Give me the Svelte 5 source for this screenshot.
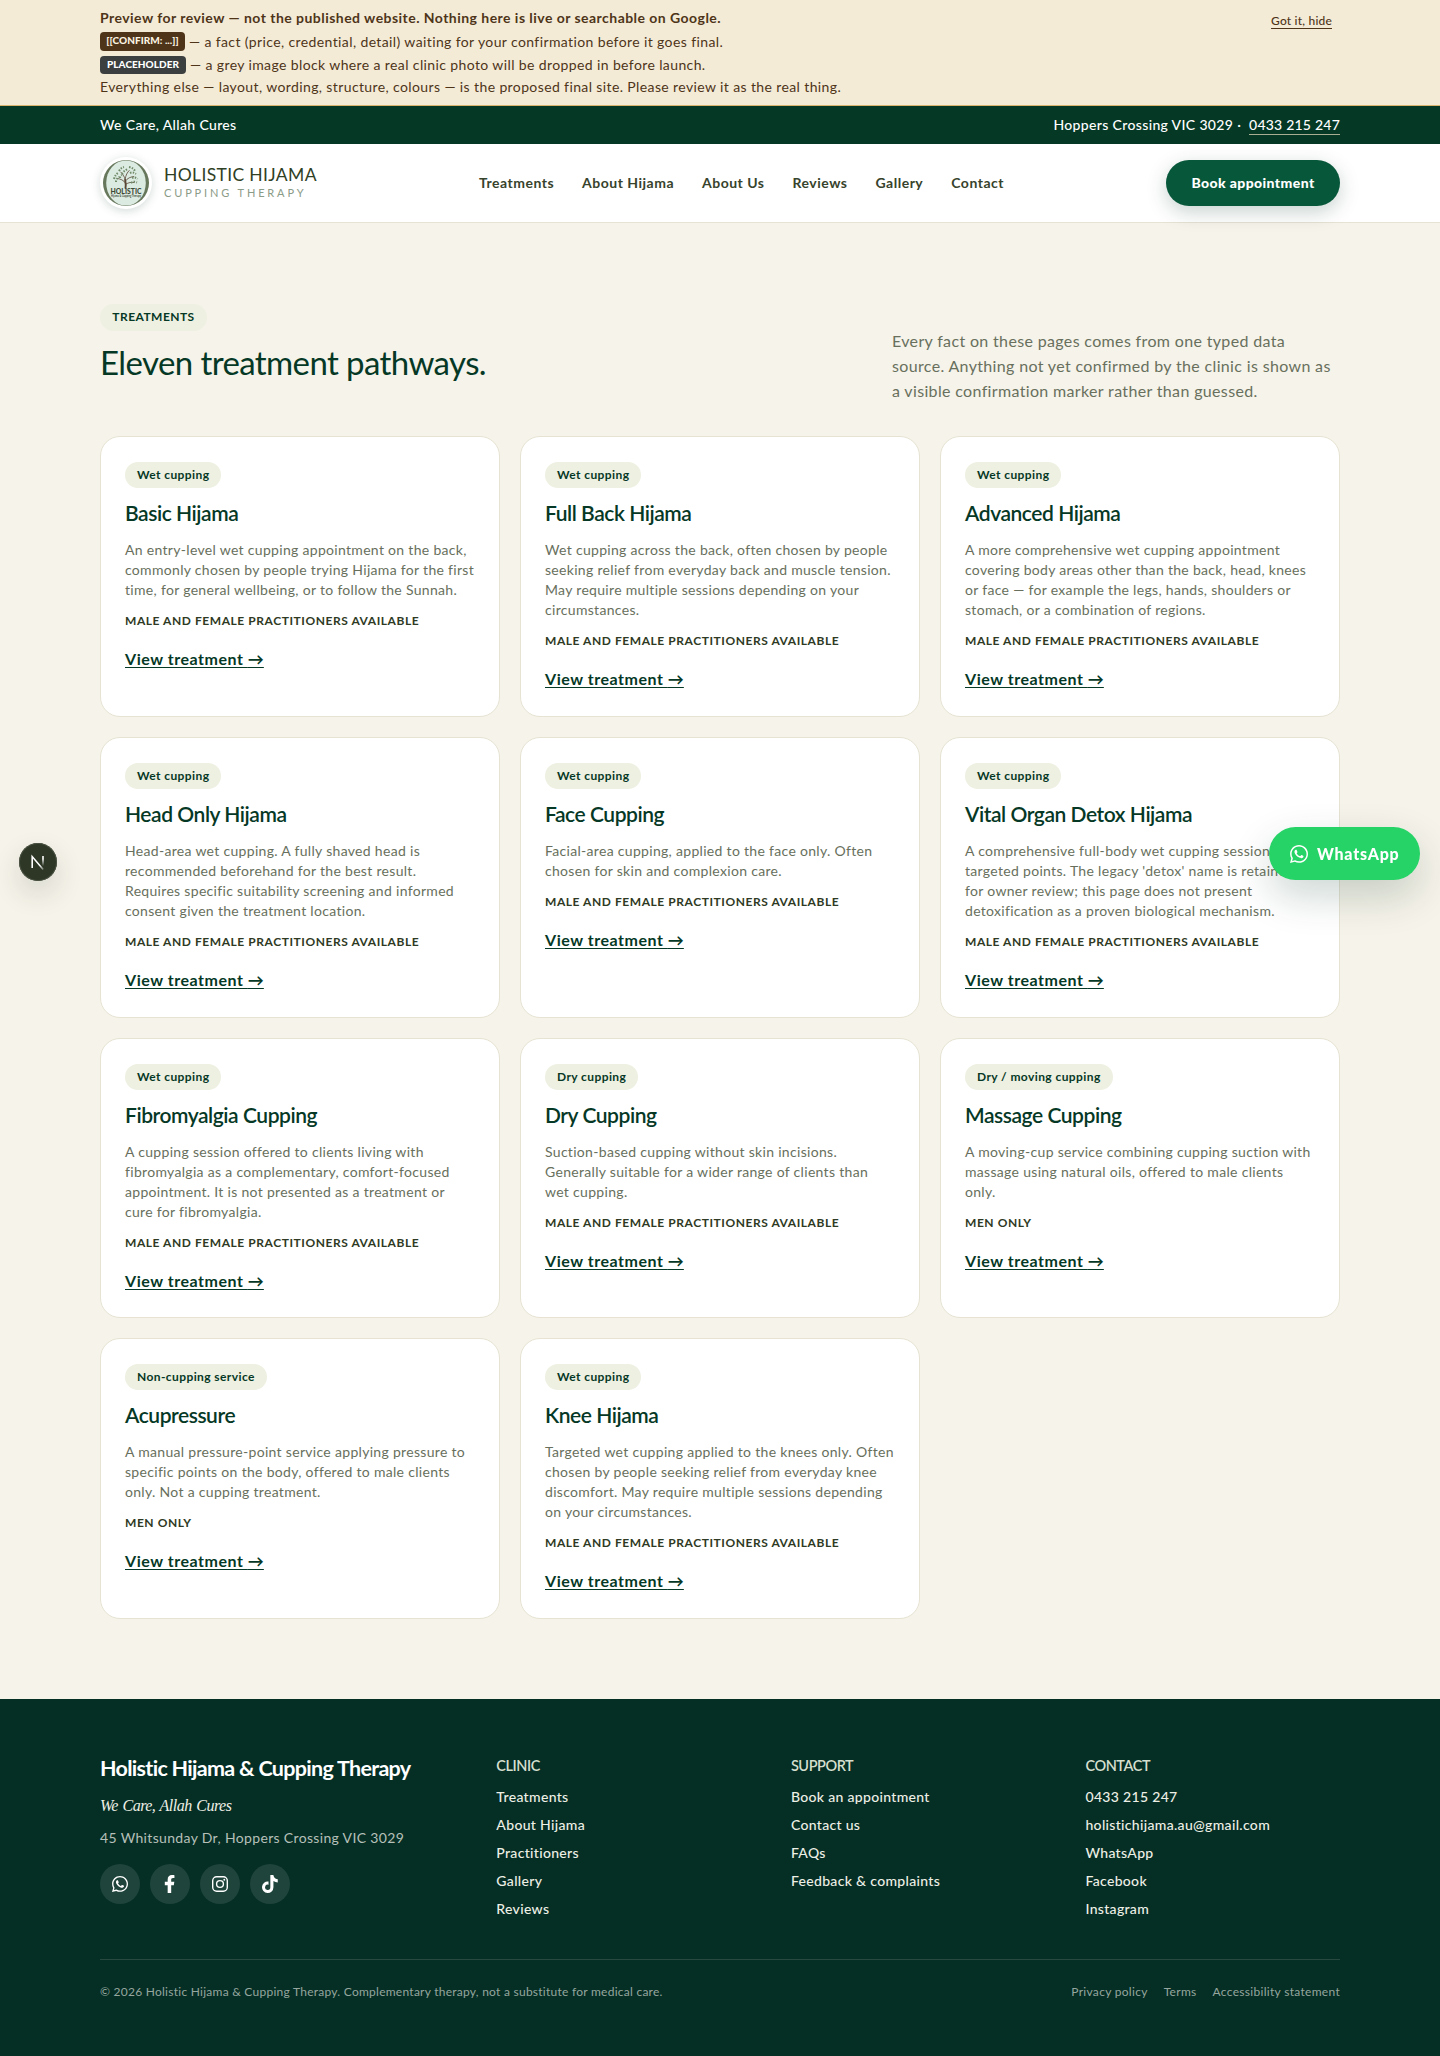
<script lang="ts">
  const nav = ["Treatments", "About Hijama", "About Us", "Reviews", "Gallery", "Contact"];

  const both = "Male and female practitioners available";
  const men = "Men only";

  // line breaks in the descriptions are kept as written
  const treatments = [
    {
      type: "Wet cupping",
      name: "Basic Hijama",
      text: "An entry-level wet cupping appointment on the back,\ncommonly chosen by people trying Hijama for the first\ntime, for general wellbeing, or to follow the Sunnah.",
      who: both,
    },
    {
      type: "Wet cupping",
      name: "Full Back Hijama",
      text: "Wet cupping across the back, often chosen by people\nseeking relief from everyday back and muscle tension.\nMay require multiple sessions depending on your\ncircumstances.",
      who: both,
    },
    {
      type: "Wet cupping",
      name: "Advanced Hijama",
      text: "A more comprehensive wet cupping appointment\ncovering body areas other than the back, head, knees\nor face — for example the legs, hands, shoulders or\nstomach, or a combination of regions.",
      who: both,
    },
    {
      type: "Wet cupping",
      name: "Head Only Hijama",
      text: "Head-area wet cupping. A fully shaved head is\nrecommended beforehand for the best result.\nRequires specific suitability screening and informed\nconsent given the treatment location.",
      who: both,
    },
    {
      type: "Wet cupping",
      name: "Face Cupping",
      text: "Facial-area cupping, applied to the face only. Often\nchosen for skin and complexion care.",
      who: both,
    },
    {
      type: "Wet cupping",
      name: "Vital Organ Detox Hijama",
      text: "A comprehensive full-body wet cupping session on\ntargeted points. The legacy 'detox' name is retained\nfor owner review; this page does not present\ndetoxification as a proven biological mechanism.",
      who: both,
    },
    {
      type: "Wet cupping",
      name: "Fibromyalgia Cupping",
      text: "A cupping session offered to clients living with\nfibromyalgia as a complementary, comfort-focused\nappointment. It is not presented as a treatment or\ncure for fibromyalgia.",
      who: both,
    },
    {
      type: "Dry cupping",
      name: "Dry Cupping",
      text: "Suction-based cupping without skin incisions.\nGenerally suitable for a wider range of clients than\nwet cupping.",
      who: both,
    },
    {
      type: "Dry / moving cupping",
      name: "Massage Cupping",
      text: "A moving-cup service combining cupping suction with\nmassage using natural oils, offered to male clients\nonly.",
      who: men,
    },
    {
      type: "Non-cupping service",
      name: "Acupressure",
      text: "A manual pressure-point service applying pressure to\nspecific points on the body, offered to male clients\nonly. Not a cupping treatment.",
      who: men,
    },
    {
      type: "Wet cupping",
      name: "Knee Hijama",
      text: "Targeted wet cupping applied to the knees only. Often\nchosen by people seeking relief from everyday knee\ndiscomfort. May require multiple sessions depending\non your circumstances.",
      who: both,
    },
  ];

  const columns = [
    { title: "Clinic", links: ["Treatments", "About Hijama", "Practitioners", "Gallery", "Reviews"] },
    { title: "Support", links: ["Book an appointment", "Contact us", "FAQs", "Feedback & complaints"] },
    {
      title: "Contact",
      links: ["0433 215 247", "holistichijama.au@gmail.com", "WhatsApp", "Facebook", "Instagram"],
    },
  ];

  let bannerOpen = true;
</script>

{#snippet whatsapp()}
  <svg class="wa" viewBox="0 32 448 448" aria-hidden="true">
    <path
      d="M380.9 97.1C339 55.1 283.2 32 223.9 32c-122.4 0-222 99.6-222 222 0 39.1 10.2 77.3 29.6 111L0 480l117.7-30.9c32.4 17.7 68.9 27 106.1 27h.1c122.3 0 224.1-99.6 224.1-222 0-59.3-25.2-115-67.1-157zm-157 341.6c-33.2 0-65.7-8.9-94-25.7l-6.7-4-69.8 18.3L72 359.2l-4.4-7c-18.5-29.4-28.2-63.3-28.2-98.2 0-101.7 82.8-184.5 184.6-184.5 49.3 0 95.6 19.2 130.4 54.1 34.8 34.9 56.2 81.2 56.1 130.5 0 101.8-84.9 184.6-186.6 184.6zm101.2-138.2c-5.5-2.8-32.8-16.2-37.9-18-5.1-1.9-8.8-2.8-12.5 2.8-3.7 5.6-14.3 18-17.6 21.8-3.2 3.7-6.5 4.2-12 1.4-32.6-16.3-54-29.1-75.5-66-5.7-9.8 5.7-9.1 16.3-30.3 1.8-3.7.9-6.9-.5-9.7-1.4-2.8-12.5-30.1-17.1-41.2-4.5-10.8-9.1-9.3-12.5-9.5-3.2-.2-6.9-.2-10.6-.2-3.7 0-9.7 1.4-14.8 6.9-5.1 5.6-19.4 19-19.4 46.3 0 27.3 19.9 53.7 22.6 57.4 2.8 3.7 39.1 59.7 94.8 83.8 35.2 15.2 49 16.5 66.6 13.9 10.7-1.6 32.8-13.4 37.4-26.4 4.6-13 4.6-24.1 3.2-26.4-1.3-2.5-5-3.9-10.5-6.6z"
    />
  </svg>
{/snippet}

{#if bannerOpen}
  <aside class="banner">
    <div class="wrap banner-inner">
      <div class="banner-lines">
        <p><strong>Preview for review — not the published website. Nothing here is live or searchable on Google.</strong></p>
        <p class="tall">
          <span class="chip">[[CONFIRM: ...]]</span>
          <span>— a fact (price, credential, detail) waiting for your confirmation before it goes final.</span>
        </p>
        <p>
          <span class="chip grey">PLACEHOLDER</span>
          <span>— a grey image block where a real clinic photo will be dropped in before launch.</span>
        </p>
        <p>Everything else — layout, wording, structure, colours — is the proposed final site. Please review it as the real thing.</p>
      </div>
      <button class="hide" on:click={() => (bannerOpen = false)}>Got it, hide</button>
    </div>
  </aside>
{/if}

<div class="topbar">
  <div class="wrap topbar-inner">
    <span>We Care, Allah Cures</span>
    <span class="place">Hoppers Crossing VIC 3029 · <a href="#call">0433 215 247</a></span>
  </div>
</div>

<header>
  <div class="wrap header-inner">
    <a class="brand" href="#home">
      <span class="logo">
        <svg viewBox="0 0 48 48" aria-hidden="true">
          <circle cx="24" cy="24" r="23" fill="#66775b" />
          <ellipse cx="24" cy="24" rx="19.8" ry="22.6" fill="#dcebe2" />
          <g fill="none" stroke="#5b4636" stroke-linecap="round">
            <path d="M23.5 29c.6-3 .2-5-.3-8" stroke-width="1.9" />
            <path
              d="M23.5 24c-2-3-5-4-8-4.5M23.3 22c2.5-3 5-4 8.5-4.5M23.2 21c-.8-4-2.5-6-4.5-8M23.2 20c.6-4 2-6.5 4-8.500M24 25c3-1.5 5-2 8-1.5"
              stroke-width=".8"
            />
          </g>
          <g fill="none" stroke="#6f8a68" stroke-width="2" stroke-dasharray="1.5 1.3">
            <path
              d="M12 20c1-3 2-4.500 4-6M14 23c0-2 1-4 3-5M17 12c1.5-2.5 3-3.500 5-4M20 15c1-2 3-4 6-5M27 8c3 .6 5 2 6 4M28 14c2-1 4-.5 6 1M30 19c2-1 4-.5 5.5 1M29 24c2-1.5 4-1.5 6-.5M18 19c0-1.5 1-2.5 2-3"
            />
          </g>
          <text x="24" y="34.6" text-anchor="middle" textLength="31" lengthAdjust="spacingAndGlyphs" class="logo-name">HOLISTIC</text>
          <text x="24" y="38.4" text-anchor="middle" textLength="30" lengthAdjust="spacingAndGlyphs" class="logo-sub">Hijama &amp; Cupping Therapy</text>
        </svg>
      </span>
      <span class="brand-text">
        <span class="brand-name">HOLISTIC HIJAMA</span>
        <span class="brand-sub">CUPPING THERAPY</span>
      </span>
    </a>
    <nav>
      {#each nav as item}
        <a href={`#${item}`}>{item}</a>
      {/each}
    </nav>
    <a class="book" href="#book">Book appointment</a>
  </div>
</header>

<main>
  <div class="wrap">
    <div class="intro">
      <div>
        <span class="eyebrow">TREATMENTS</span>
        <h1>Eleven treatment pathways.</h1>
      </div>
      <p>{"Every fact on these pages comes from one typed data\nsource. Anything not yet confirmed by the clinic is shown as\na visible confirmation marker rather than guessed."}</p>
    </div>

    <div class="grid">
      {#each treatments as t}
        <article>
          <span class="pill">{t.type}</span>
          <h2>{t.name}</h2>
          <p class="text">{t.text}</p>
          <p class="who">{t.who}</p>
          <a href="#view">View treatment <span class="arrow">→</span></a>
        </article>
      {/each}
    </div>
  </div>
</main>

<footer>
  <div class="wrap">
    <div class="footer-grid">
      <div class="about">
        <h3>Holistic Hijama &amp; Cupping Therapy</h3>
        <p class="motto">We Care, Allah Cures</p>
        <p class="address">45 Whitsunday Dr, Hoppers Crossing VIC 3029</p>
        <div class="social">
          <a href="#whatsapp" aria-label="WhatsApp">{@render whatsapp()}</a>
          <a href="#facebook" aria-label="Facebook">
            <svg class="fb" viewBox="0 0 320 512" aria-hidden="true">
              <path d="M279.14 288l14.22-92.66h-88.91v-60.13c0-25.35 12.42-50.06 52.24-50.06h40.42V6.26S260.43 0 225.36 0c-73.22 0-121.08 44.38-121.08 124.72v70.62H22.89V288h81.39v224h100.17V288z" />
            </svg>
          </a>
          <a href="#instagram" aria-label="Instagram">
            <svg class="ig" viewBox="0 0 16 16" aria-hidden="true">
              <rect x=".7" y=".7" width="14.6" height="14.6" rx="4" />
              <circle cx="8" cy="8" r="3.4" />
              <circle class="dot" cx="12.3" cy="3.7" r=".95" />
            </svg>
          </a>
          <a href="#tiktok" aria-label="TikTok">
            <svg class="tt" viewBox="0 0 448 512" aria-hidden="true">
              <path d="M448,209.91a210.06,210.06,0,0,1-122.77-39.25V349.38A162.55,162.55,0,1,1,185,188.31V278.2a74.62,74.62,0,1,0,52.23,71.18V0l88,0a121.18,121.18,0,0,0,1.86,22.17h0A122.18,122.18,0,0,0,381,102.39a121.43,121.43,0,0,0,67,20.14Z" />
            </svg>
          </a>
        </div>
      </div>
      {#each columns as col}
        <div class="col">
          <h4>{col.title}</h4>
          {#each col.links as link}
            <a href={`#${link}`}>{link}</a>
          {/each}
        </div>
      {/each}
    </div>
    <div class="legal">
      <span>© 2026 Holistic Hijama &amp; Cupping Therapy. Complementary therapy, not a substitute for medical care.</span>
      <div class="legal-links">
        <a href="#privacy">Privacy policy</a>
        <a href="#terms">Terms</a>
        <a href="#accessibility">Accessibility statement</a>
      </div>
    </div>
  </div>
</footer>

<a class="float" href="#whatsapp">{@render whatsapp()}<span>WhatsApp</span></a>

<div class="dev">
  <svg viewBox="0 0 38 38" aria-hidden="true">
    <defs>
      <linearGradient id="n-diag" x1="15" y1="15" x2="25" y2="27" gradientUnits="userSpaceOnUse">
        <stop offset=".6" stop-color="#fff" />
        <stop offset="1" stop-color="#fff" stop-opacity="0.2" />
      </linearGradient>
      <linearGradient id="n-bar" x1="0" y1="13" x2="0" y2="23" gradientUnits="userSpaceOnUse">
        <stop offset=".3" stop-color="#fff" />
        <stop offset="1" stop-color="#fff" stop-opacity="0" />
      </linearGradient>
    </defs>
    <path d="M13.2 25V13.6L24.2 26.5" fill="none" stroke="url(#n-diag)" stroke-width="1.6" />
    <path d="M24 13v10" stroke="url(#n-bar)" stroke-width="1.6" />
  </svg>
</div>

<style>
  :global(body) {
    margin: 0;
    background: #f6f3ea;
    font-family: Lato, "Open Sans", sans-serif;
    font-size: 14px;
    color: #063826;
  }
  p,
  h1,
  h2,
  h3,
  h4 {
    margin: 0;
  }
  a {
    color: inherit;
    text-decoration: none;
  }
  .wrap {
    width: 1240px;
    margin: 0 auto;
  }

  /* review banner */
  .banner {
    background: #f4ebd7;
    border-bottom: 1px solid #d9b46c;
    color: #4e3519;
    padding: 7px 0;
    height: 91px;
  }
  .banner-inner {
    display: flex;
    justify-content: space-between;
    align-items: flex-start;
  }
  .banner-lines p {
    display: flex;
    align-items: center;
    gap: 4px;
    height: 22px;
    line-height: 22px;
    letter-spacing: 0.386px;
    white-space: nowrap;
  }
  .banner-lines p.tall {
    height: 25px;
  }
  strong {
    font-weight: 700;
    letter-spacing: 0.46px;
  }
  .chip {
    box-sizing: border-box;
    width: 85px;
    height: 19px;
    line-height: 17px;
    border-radius: 4px;
    background: #4e3519;
    color: #fbf3e2;
    font-size: 10px;
    font-weight: 900;
    letter-spacing: 0.05px;
    text-align: center;
  }
  .chip.grey {
    width: 86px;
    height: 18px;
    background: #3b3f3f;
    color: #fff;
  }
  .hide {
    margin: 5px 8px 0 0;
    padding: 0;
    border: 0;
    background: none;
    font: 500 12px/18px Lato, sans-serif;
    letter-spacing: 0.2px;
    color: inherit;
    text-decoration: underline;
    text-underline-offset: 3px;
    cursor: pointer;
  }

  .topbar {
    background: #063826;
    color: #fff;
  }
  .topbar-inner {
    display: flex;
    justify-content: space-between;
    height: 38px;
    line-height: 38px;
    font-weight: 500;
    letter-spacing: 0.35px;
  }
  .place a {
    margin-left: 4px;
    padding-bottom: 1px;
    border-bottom: 1px solid #a9ad91;
    letter-spacing: 0.22px;
  }

  header {
    background: #fff;
    border-bottom: 1px solid #e6e2d4;
  }
  .header-inner {
    display: flex;
    align-items: center;
    justify-content: space-between;
    height: 78px;
  }
  .brand {
    display: flex;
    align-items: center;
    gap: 12px;
    width: 260px;
  }
  .logo {
    box-sizing: border-box;
    width: 52px;
    height: 52px;
    padding: 2px;
    border-radius: 50%;
    background: #fff;
    box-shadow: 0 2px 10px rgba(6, 56, 38, 0.18);
  }
  .logo svg {
    display: block;
  }
  .logo-name {
    font: 900 6.5px Lato, sans-serif;
    fill: #3d4a35;
  }
  .logo-sub {
    font: 700 3px Lato, sans-serif;
    fill: #3d4a35;
  }
  .brand-text {
    display: flex;
    flex-direction: column;
    margin-top: -1px;
    white-space: nowrap;
  }
  .brand-name {
    font-size: 17.5px;
    line-height: 20px;
    letter-spacing: 0.35px;
    color: #2f4025;
  }
  .brand-sub {
    font-size: 11px;
    line-height: 15px;
    letter-spacing: 2.86px;
    color: #8a9b87;
  }
  nav {
    display: flex;
    gap: 28px;
    margin: -1px 0 0 31px;
    font-weight: 700;
    letter-spacing: 0.5px;
    color: #37432c;
  }
  .book {
    width: 174px;
    height: 46px;
    margin-left: 74px;
    border-radius: 23px;
    background: #07573b;
    color: #fff;
    font-weight: 900;
    line-height: 46px;
    letter-spacing: 0.4px;
    text-align: center;
    box-shadow: 0 6px 20px rgba(6, 56, 38, 0.22);
  }

  main {
    background: #f6f3ea;
    padding: 81px 0 80px;
  }
  .intro {
    display: flex;
    justify-content: space-between;
    height: 132px;
  }
  .eyebrow {
    display: block;
    width: 107px;
    height: 27px;
    border-radius: 14px;
    background: #eef0e1;
    font-size: 12px;
    font-weight: 700;
    line-height: 26px;
    letter-spacing: 0.45px;
    text-align: center;
  }
  h1 {
    margin-top: 10px;
    font-size: 33px;
    font-weight: 400;
    line-height: 42px;
    letter-spacing: -0.6px;
  }
  .intro p {
    width: 448px;
    padding-top: 24px;
    font-size: 16px;
    line-height: 25px;
    letter-spacing: 0.345px;
    color: #68705d;
    white-space: pre;
  }
  .grid {
    display: grid;
    grid-template-columns: repeat(3, 1fr);
    gap: 20px;
  }
  article {
    box-sizing: border-box;
    height: 280.8px;
    padding: 25px 24px;
    border: 1px solid #e6e3d3;
    border-radius: 20px;
    background: #fff;
  }
  .pill {
    display: inline-block;
    height: 26px;
    padding: 0 12px;
    border-radius: 13px;
    background: #eef0e1;
    font-size: 12px;
    font-weight: 700;
    line-height: 26px;
    letter-spacing: 0.41px;
  }
  h2 {
    margin: 10px 0 12px;
    font-size: 21px;
    font-weight: 600;
    line-height: 30px;
    letter-spacing: -0.45px;
  }
  .text {
    line-height: 20px;
    letter-spacing: 0.31px;
    color: #68705d;
    white-space: pre;
  }
  .who {
    margin: 11px 0 18px;
    font-size: 12px;
    font-weight: 700;
    line-height: 20px;
    letter-spacing: 0.557px;
    text-transform: uppercase;
    color: #2f3a24;
  }
  article a {
    display: inline-block;
    font-size: 16px;
    font-weight: 700;
    line-height: 20px;
    letter-spacing: 0.53px;
    text-decoration: underline;
    text-decoration-thickness: 1px;
    text-underline-offset: 2px;
  }
  .arrow {
    letter-spacing: 0;
  }

  footer {
    background: #052e25;
    color: #eef0e6;
    padding-top: 56px;
    height: 301px;
  }
  .footer-grid {
    display: grid;
    grid-template-columns: 1.4fr 1fr 1fr 1fr;
    column-gap: 40px;
    height: 204px;
    border-bottom: 1px solid #27493f;
  }
  .about {
    white-space: nowrap;
  }
  h3 {
    margin-top: -1px;
    font-size: 21.5px;
    font-weight: 700;
    line-height: 28px;
    letter-spacing: -0.7px;
    color: #fff;
  }
  .motto {
    margin-top: 13px;
    font: italic 16px/22px "Liberation Serif", serif;
    letter-spacing: -0.5px;
    word-spacing: 1px;
  }
  .address {
    margin-top: 10px;
    line-height: 22px;
    letter-spacing: 0.34px;
    color: #b6c0b9;
  }
  .social {
    display: flex;
    gap: 10px;
    margin-top: 15px;
  }
  .social a {
    display: grid;
    place-items: center;
    width: 40px;
    height: 40px;
    border-radius: 50%;
    background: #1f443b;
  }
  svg {
    fill: #fff;
  }
  .wa {
    width: 16px;
    height: 16px;
  }
  .fb {
    height: 18px;
  }
  .ig {
    width: 16px;
    height: 16px;
    fill: none;
    stroke: #fff;
    stroke-width: 1.4;
  }
  .ig .dot {
    fill: #fff;
    stroke: none;
  }
  .tt {
    height: 18px;
  }
  .col {
    display: flex;
    flex-direction: column;
    font-weight: 500;
    letter-spacing: 0.32px;
  }
  h4 {
    margin: 1px 0 7px;
    font-size: 14.5px;
    font-weight: 600;
    line-height: 20px;
    letter-spacing: -0.45px;
    text-transform: uppercase;
    color: #d5dfce;
  }
  .col a {
    line-height: 28px;
  }
  .legal {
    display: flex;
    justify-content: space-between;
    padding-top: 22px;
    font-size: 12px;
    line-height: 20px;
    letter-spacing: 0.255px;
    color: #95a69e;
  }
  .legal-links {
    display: flex;
    gap: 16px;
    letter-spacing: 0.3px;
  }

  /* floating buttons */
  .float {
    position: fixed;
    top: 827px;
    right: 20px;
    display: flex;
    align-items: center;
    gap: 9px;
    box-sizing: border-box;
    width: 151px;
    height: 53px;
    padding-left: 21px;
    border-radius: 27px;
    background: #25d366;
    color: #fff;
    font-size: 16px;
    font-weight: 900;
    letter-spacing: 0.75px;
    box-shadow: 0 16px 40px rgba(6, 56, 38, 0.2);
  }
  .float .wa {
    width: 18px;
    height: 18px;
  }
  .dev {
    position: fixed;
    top: 843px;
    left: 19px;
    width: 38px;
    height: 38px;
    border-radius: 50%;
    background: #2e3725;
    box-shadow:
      inset 0 0 0 1px #4b5344,
      0 12px 28px rgba(46, 55, 37, 0.16);
  }
</style>
